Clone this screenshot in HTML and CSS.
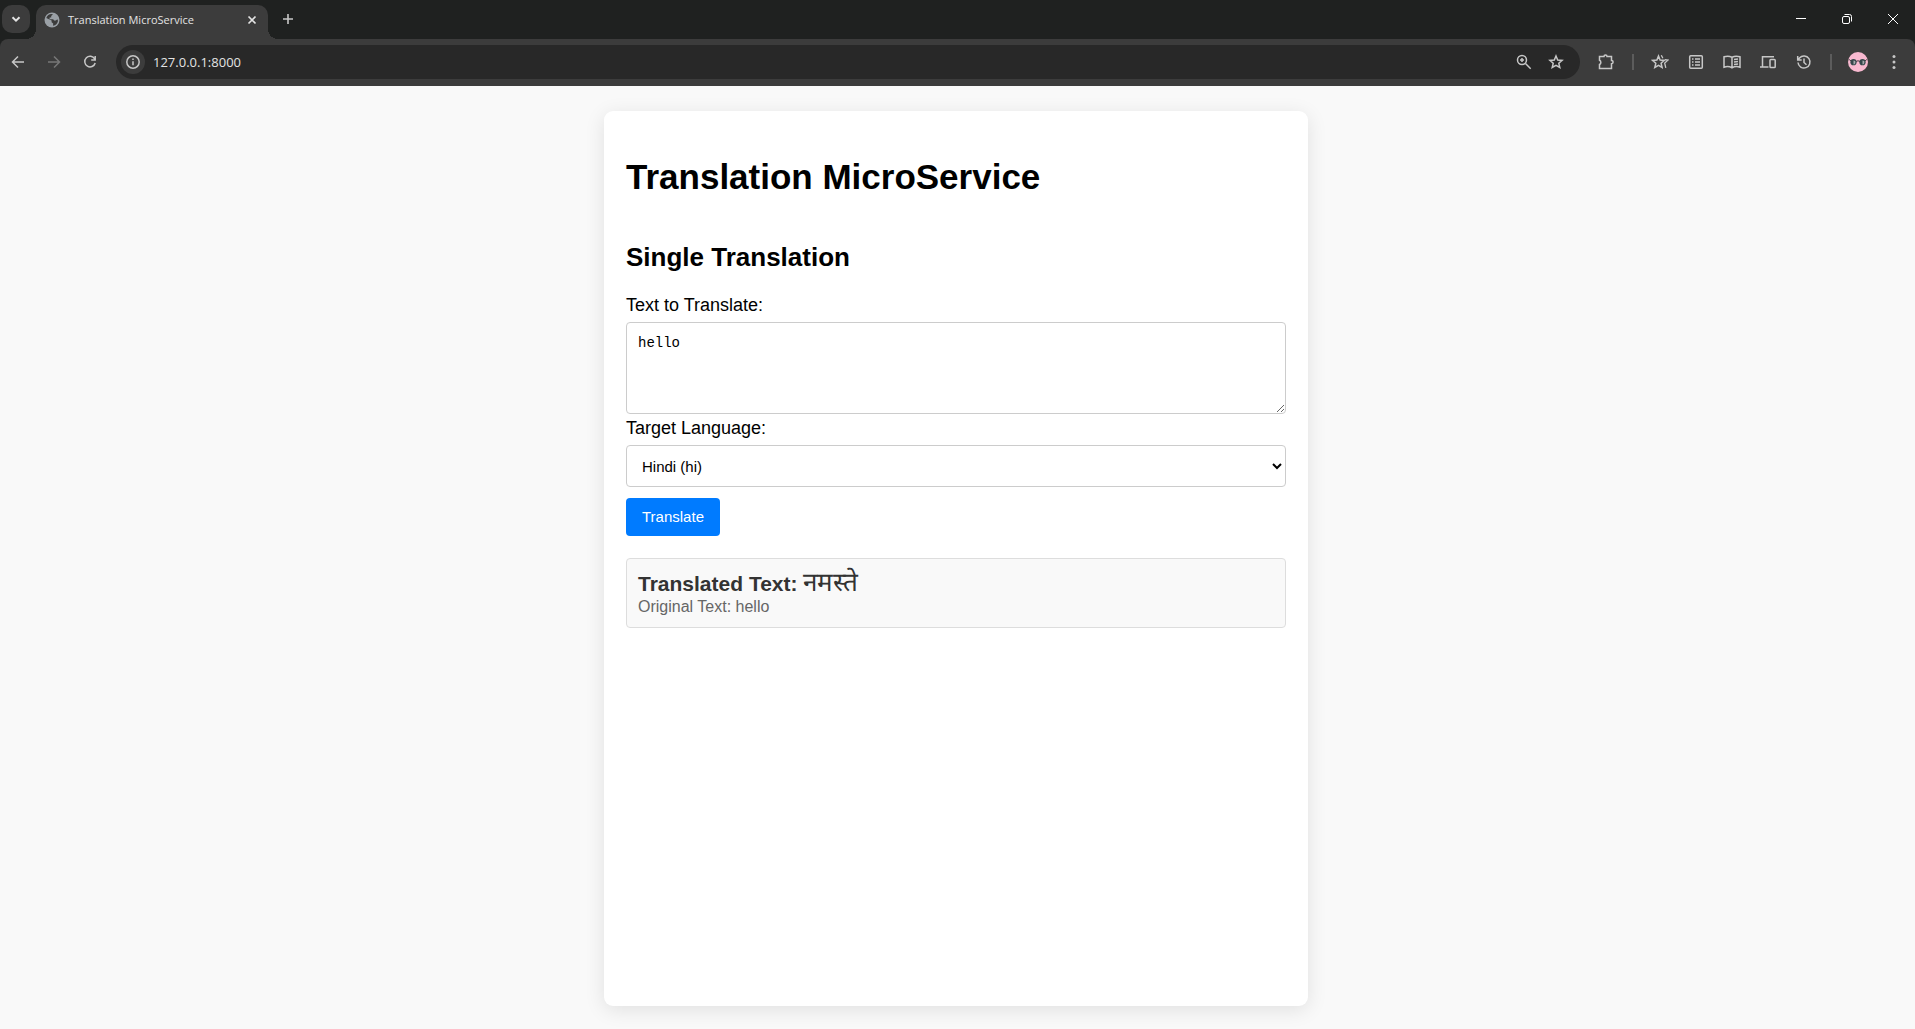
FILE: index.html
```html
<!DOCTYPE html>
<html lang="en">
<head>
<meta charset="utf-8">
<title>Translation MicroService</title>
<link rel="stylesheet" href="styles.css">
</head>
<body>
<header class="browser">
  <div class="tabstrip">
    <button class="tab-search" aria-label="Search tabs"><svg class="icon" viewBox="0 0 16 16"><path d="M4.500 6.200 8 9.600l3.500-3.400" stroke-width="2"/></svg></button>
    <div class="tab">
      <svg class="globe" viewBox="0 0 16 16" aria-hidden="true"><circle cx="8" cy="8" r="7.500" fill="#9aa0a6"/><path d="M9 2.200 7.200 4v1.600H5.600v1.600h3.600l.9 1.200h1.700l1.600-1.100.6 1.700A6 6 0 0 1 9 13.800l.2-2.300-1.600-1.300V8.600L2.300 6.100A6 6 0 0 1 9 2.200Z" fill="#3c3c3c"/><path d="M10.500 3.200 9.800 5l1.300 1.200 1.800-.5A6 6 0 0 0 10.500 3.200Z" fill="#9aa0a6"/></svg>
      <span class="tab-title">Translation MicroService</span>
      <button class="tab-close" aria-label="Close tab"><svg class="icon" viewBox="0 0 16 16"><path d="m4.500 4.500 7 7m0-7-7 7" stroke-width="1.700"/></svg></button>
    </div>
    <button class="new-tab" aria-label="New tab"><svg class="icon" viewBox="0 0 16 16"><path d="M8 3v10M3 8h10" stroke-width="1.600"/></svg></button>
    <div class="window-controls">
      <button aria-label="Minimize"><svg class="icon thin" viewBox="0 0 16 16"><path d="M3 7.500h10"/></svg></button>
      <button aria-label="Restore"><svg class="icon thin" viewBox="0 0 16 16"><rect x="3.500" y="5.500" width="7" height="7" rx="1.500"/><path d="M5.500 3.500h5a2 2 0 0 1 2 2v5"/></svg></button>
      <button aria-label="Close"><svg class="icon thin" viewBox="0 0 16 16"><path d="m3 3 10 10M13 3 3 13"/></svg></button>
    </div>
  </div>
  <div class="toolbar">
    <nav class="nav" aria-label="History">
      <button aria-label="Back"><svg class="icon" viewBox="0 0 16 16"><path d="M14 8H2.800M8 2.500 2.500 8 8 13.500"/></svg></button>
      <button aria-label="Forward" disabled><svg class="icon" viewBox="0 0 16 16"><path d="M2 8h11.200M8 2.500 13.500 8 8 13.500"/></svg></button>
      <button aria-label="Reload"><svg class="icon" viewBox="0 0 16 16"><path d="M12.700 5A5.300 5.300 0 1 0 13.200 9M13.200 2v4H9.200"/></svg></button>
    </nav>
    <div class="omnibox">
      <button class="site-info" aria-label="Site information"><svg class="icon" viewBox="0 0 16 16"><circle cx="8" cy="8" r="6.200"/><path d="M8 7.200v4M8 4.500v1.400"/></svg></button>
      <input class="url" type="text" value="127.0.0.1:8000" aria-label="Address">
      <button aria-label="Zoom"><svg class="icon" viewBox="0 0 16 16"><circle cx="6" cy="6" r="4.500"/><path d="m9.500 9.500 5.200 5.200M6 4v4M4 6h4"/></svg></button>
      <button aria-label="Bookmark"><svg class="icon" viewBox="0 0 16 16"><path d="m8 2 1.700 4 4.400.4-3.300 2.900 1 4.200L8 11.300l-3.800 2.200 1-4.200-3.300-2.900L6.300 6Z"/></svg></button>
    </div>
    <div class="actions">
      <button aria-label="Extensions"><svg class="icon wide" viewBox="0 0 18 16"><path d="M2.500 2.500H7a1.500 1.500 0 0 1 3 0h4.500v4a1.600 1.600 0 0 1 0 3.200v4.800h-12v-4a2.300 2.300 0 0 0 0-4.200Z"/></svg></button>
      <span class="separator"></span>
      <button aria-label="Bookmarks"><svg class="icon wide" viewBox="0 0 18 16"><path d="m7.500 2 1.600 4 4.200.4-3.200 2.900 1 4.200-3.600-2.200-3.700 2.200 1-4.200-3.200-2.900L5.900 6Z"/><path d="m10.300 1.300 1.600 3M13.800 5.600l3.200.5-3.300 3 1.100 4.700" stroke-width="1.300"/></svg></button>
      <button aria-label="Reading list"><svg class="icon" viewBox="0 0 16 16"><rect x="1.700" y="1.700" width="12.600" height="12.600" rx="1"/><path d="M4 5h1.500M4 8h1.500M4 11h1.500M7 5h5M7 8h5M7 11h5"/></svg></button>
      <button aria-label="Reading mode"><svg class="icon wide" viewBox="0 0 18 16"><path d="M9 3.200C6.500 2 3.500 2 1 2.800v10.400c2.500-.8 5.500-.8 8 .6 2.500-1.400 5.500-1.400 8-.6V2.800C14.500 2 11.500 2 9 3.200Zm0 0v10.600M11 5.600l4-.5M11 8.100l4-.5M11 10.600l4-.5"/></svg></button>
      <button aria-label="Send to devices"><svg class="icon wide" viewBox="0 0 18 16"><path d="M3.500 12.500V2.700H15M1 13h8.500"/><rect x="11" y="5.500" width="5.200" height="8" rx=".8"/></svg></button>
      <button aria-label="History"><svg class="icon" viewBox="0 0 16 16"><path d="M2 8.500A6 6 0 1 0 3.500 4L2 5.700M1.700 2v4h4M8 4.500v4l2.500 2.200"/></svg></button>
      <span class="separator"></span>
      <button aria-label="Profile"><svg class="avatar" viewBox="0 0 20 20"><circle cx="10" cy="10" r="10" fill="#f8b9d0"/><path d="M1.200 7.500 3 9M18.800 7.500 17 9M8 9.500q2-1.500 4 0" fill="none" stroke="#4a3a42"/><circle cx="5.500" cy="10.200" r="3.100" fill="#34474b"/><circle cx="14.500" cy="10.200" r="3.100" fill="#34474b"/><path d="M5.500 8.500v4c1.800 0 2.200-2 1.700-3.500ZM14.500 8.500v4c1.800 0 2.200-2 1.700-3.500Z" fill="#a5a8ac"/></svg></button>
      <button aria-label="Menu"><svg class="icon dots" viewBox="0 0 16 16"><circle cx="8" cy="2.500" r="1.500"/><circle cx="8" cy="8" r="1.500"/><circle cx="8" cy="13.500" r="1.500"/></svg></button>
    </div>
  </div>
</header>
<main class="page">
  <section class="card">
    <h1>Translation MicroService</h1>
    <h2>Single Translation</h2>
    <form class="form">
      <label for="text">Text to Translate:</label>
      <textarea id="text">hello</textarea>
      <label for="language">Target Language:</label>
      <select id="language"><option>Hindi (hi)</option></select>
      <button class="submit" type="button">Translate</button>
    </form>
    <div class="result">
      <h3>Translated Text: <span lang="hi">नमस्ते</span></h3>
      <p>Original Text: hello</p>
    </div>
  </section>
</main>
</body>
</html>
```
FILE: styles.css
```css
* { box-sizing: border-box; }

body {
  margin: 0;
  min-height: 100vh;
  display: flex;
  flex-direction: column;
  background: #f9f9f9;
  color: #000;
  font-family: "Liberation Sans", Arial, sans-serif;
}

/* Browser frame */
.browser {
  background: #1f2120;
  color: #e3e3e3;
  font-family: "Open Sans", "Segoe UI", sans-serif;
}
.browser button {
  display: flex;
  align-items: center;
  justify-content: center;
  flex: none;
  padding: 0;
  border: 0;
  background: none;
  color: #c7c7c7;
}
.browser button:disabled { color: #777; }
.icon {
  width: 16px;
  height: 16px;
  fill: none;
  stroke: currentColor;
  stroke-width: 1.5;
}
.icon.wide { width: 18px; }
.icon.thin { stroke-width: 1; color: #fff; }
.icon.dots { fill: currentColor; stroke: none; }

.tabstrip {
  display: flex;
  height: 39px;
  padding: 5px 0 0 2px;
}
.browser .tab-search {
  width: 28px;
  height: 28px;
  border-radius: 10px;
  background: #3c3c3c;
  color: #e3e3e3;
}
.tab {
  position: relative;
  display: flex;
  align-items: center;
  width: 232px;
  height: 34px;
  margin-left: 6px;
  padding: 0 8px 5px 8px;
  border-radius: 10px 10px 0 0;
  background: #3c3c3c;
}
.tab::before,
.tab::after {
  content: "";
  position: absolute;
  bottom: 0;
  width: 10px;
  height: 10px;
}
.tab::before {
  right: 100%;
  background: radial-gradient(circle at 0 0, transparent 10px, #3c3c3c 10px);
}
.tab::after {
  left: 100%;
  background: radial-gradient(circle at 100% 0, transparent 10px, #3c3c3c 10px);
}
.globe { width: 16px; height: 16px; }
.tab-title {
  flex: 1;
  padding-left: 8px;
  font-size: 11px;
  line-height: 16px;
  white-space: nowrap;
}
.tab-close { width: 16px; height: 16px; }
.browser .tab-close { color: #e3e3e3; }
.new-tab { width: 28px; height: 28px; margin-left: 6px; }
.window-controls { display: flex; margin-left: auto; margin-right: -1px; }
.window-controls button { width: 46px; height: 28px; }

.toolbar {
  display: flex;
  align-items: center;
  height: 47px;
  padding: 0 3px 1px 0;
  border-radius: 8px 8px 0 0;
  background: #3c3c3c;
}
.nav { display: flex; padding-right: 8px; }
.nav button { width: 36px; height: 34px; }
.omnibox {
  display: flex;
  align-items: center;
  flex: 1;
  height: 34px;
  margin-right: 8px;
  padding: 0 8px 0 5px;
  border-radius: 17px;
  background: #282828;
}
.omnibox button { width: 32px; height: 24px; }
.browser .site-info {
  width: 24px;
  border-radius: 12px;
  background: #3c3c3c;
}
.url {
  flex: 1;
  min-width: 0;
  padding: 0 8px;
  border: 0;
  background: none;
  color: #e3e3e3;
  font: 13px/20px "Open Sans", "Segoe UI", sans-serif;
}
.actions { display: flex; align-items: center; }
.actions button { width: 36px; height: 34px; }
.separator {
  width: 2px;
  height: 16px;
  margin: 0 8px;
  background: #5c5c5c;
}
.avatar { width: 20px; height: 20px; }

/* Page */
.page {
  flex: 1;
  display: flex;
  justify-content: center;
  padding: 25px 22px 23px;
}
.card {
  width: 100%;
  max-width: 704px;
  margin-right: 3px;
  padding: 22px;
  border-radius: 9px;
  background: #fff;
  box-shadow: 0 4px 20px rgba(0, 0, 0, 0.1);
}
h1 { margin: 24px 0 45px; font-size: 35px; line-height: 40px; }
h2 { margin: 0 0 23px; font-size: 26px; line-height: 30px; }

.form { display: flex; flex-direction: column; }
.form label { margin-bottom: 7px; font-size: 18px; line-height: 20px; }
.form textarea,
.form select {
  width: 100%;
  border: 1px solid #ccc;
  border-radius: 4px;
  background: #fff;
  color: #000;
}
.form textarea {
  height: 92px;
  margin-bottom: 4px;
  padding: 11px;
  font: 14px/18px "Liberation Mono", monospace;
}
.form select {
  height: 42px;
  padding: 0 11px;
  font: 15px/20px "Liberation Sans", Arial, sans-serif;
}
.submit {
  align-self: flex-start;
  height: 38px;
  margin-top: 11px;
  padding: 0 16px;
  border: 0;
  border-radius: 4px;
  background: #007bff;
  color: #fff;
  font: 15px/20px "Liberation Sans", Arial, sans-serif;
}
.result {
  margin-top: 22px;
  padding: 11px;
  border: 1px solid #ddd;
  border-radius: 4px;
  background: #f9f9f9;
}
.result h3 {
  margin: 0;
  color: #333;
  font-size: 21px;
  line-height: 28px;
}
.result p {
  margin: 0;
  color: #666;
  font-size: 16px;
  line-height: 18px;
}
.result span {
  font-size: 26px;
  font-weight: 400;
  line-height: 20px;
}
```
